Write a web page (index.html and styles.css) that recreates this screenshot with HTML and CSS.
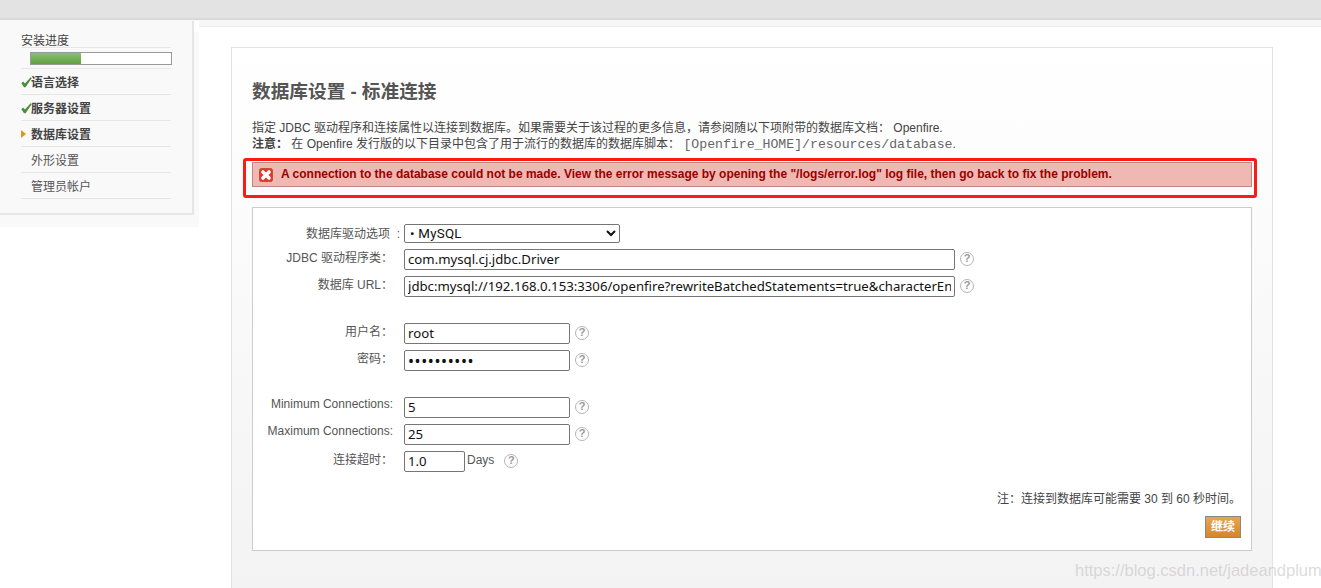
FILE: index.html
```html
<!DOCTYPE html>
<html lang="zh">
<head>
<meta charset="utf-8">
<title>数据库设置</title>
<link rel="stylesheet" href="styles.css">
</head>
<body>
<div class="topbar"></div>
<div class="layout">
  <aside class="side-wrap">
    <nav class="side">
      <div class="side-head">安装进度</div>
      <div class="progress-row"><div class="progress"><div class="progress-fill"></div></div></div>
      <div class="step done"><svg class="mark" viewBox="0 0 11 11"><path d="M0.3 6.2 L2.2 4.4 L4 6.6 L9.6 0.3 L10.8 1 L4.6 10.2 L3 10.2 Z" fill="#4a8f3c"/></svg>语言选择</div>
      <div class="step done"><svg class="mark" viewBox="0 0 11 11"><path d="M0.3 6.2 L2.2 4.4 L4 6.6 L9.6 0.3 L10.8 1 L4.6 10.2 L3 10.2 Z" fill="#4a8f3c"/></svg>服务器设置</div>
      <div class="step current"><svg class="arrow" viewBox="0 0 5 8"><path d="M0 0 L5 4 L0 8 Z" fill="#d99a12"/></svg>数据库设置</div>
      <div class="step">外形设置</div>
      <div class="step">管理员帐户</div>
    </nav>
  </aside>
  <main class="main">
    <h1 class="title">数据库设置 - 标准连接</h1>
    <p class="desc">指定 JDBC 驱动程序和连接属性以连接到数据库。如果需要关于该过程的更多信息，请参阅随以下项附带的数据库文档： Openfire.<br><b>注意：</b> 在 Openfire 发行版的以下目录中包含了用于流行的数据库的数据库脚本： <code>[Openfire_HOME]/resources/database</code>.</p>
    <div class="alert-mark">
      <div class="alert">
        <svg class="alert-icon" viewBox="0 0 16 16"><rect x="0.5" y="0.5" width="15" height="15" rx="2.5" fill="#dd3a2a" stroke="#c4432f"/><path d="M4.5 4.5 L11.5 11.5 M11.5 4.5 L4.5 11.5" stroke="#fff" stroke-width="4" stroke-linecap="round"/></svg>
        <span>A connection to the database could not be made. View the error message by opening the "/logs/error.log" log file, then go back to fix the problem.</span>
      </div>
    </div>
    <form class="panel">
      <div class="row row-select">
        <label class="lbl lbl-select" for="driver">数据库驱动选项&nbsp;&nbsp;:</label>
        <select class="select" id="driver"><option>• MySQL</option></select>
      </div>
      <div class="row">
        <label class="lbl" for="cls">JDBC 驱动程序类：</label>
        <input class="field wide" id="cls" value="com.mysql.cj.jdbc.Driver"><span class="help">?</span>
      </div>
      <div class="row">
        <label class="lbl" for="url">数据库 URL：</label>
        <input class="field wide" id="url" value="jdbc:mysql://192.168.0.153:3306/openfire?rewriteBatchedStatements=true&amp;characterEncoding=UTF-8"><span class="help">?</span>
      </div>
      <div class="row gap">
        <label class="lbl" for="user">用户名：</label>
        <input class="field mid" id="user" value="root"><span class="help">?</span>
      </div>
      <div class="row">
        <label class="lbl" for="pw">密码：</label>
        <input class="field mid dots" id="pw" type="password" value="1234567890"><span class="help">?</span>
      </div>
      <div class="row gap">
        <label class="lbl lbl-en" for="min">Minimum Connections:</label>
        <input class="field mid" id="min" value="5"><span class="help">?</span>
      </div>
      <div class="row">
        <label class="lbl lbl-en" for="max">Maximum Connections:</label>
        <input class="field mid" id="max" value="25"><span class="help">?</span>
      </div>
      <div class="row">
        <label class="lbl" for="timeout">连接超时：</label>
        <input class="field small" id="timeout" value="1.0"><span class="unit">Days</span><span class="help">?</span>
      </div>
      <p class="note">注：连接到数据库可能需要 30 到 60 秒时间。</p>
      <div class="actions"><button type="button" class="btn">继续</button></div>
    </form>
  </main>
</div>
<div class="watermark">https://blog.csdn.net/jadeandplum</div>
</body>
</html>
```
FILE: styles.css
```css
* { box-sizing: border-box; }
html, body { margin: 0; height: 100%; overflow: hidden; }
body {
  position: relative;
  background: #fff;
  font: 12px/16px "Liberation Sans", "Noto Sans CJK SC", sans-serif;
  color: #444;
}
.topbar {
  height: 27px;
  background: linear-gradient(#e3e3e3 0 18px, #d9d9d9 18px 20px, #f7f7f7 20px 26px, #ececec 26px 27px);
}
.layout { display: flex; align-items: flex-start; margin-top: -6px; }
.side-wrap {
  flex: none;
  width: 199px;
  height: 206px;
  background: linear-gradient(#fff 0 11px, #f9f9f9 11px);
}
.side {
  width: 194px;
  height: 194px;
  padding: 12px 21px 0 21px;
  background: #f9f9f9;
  border-right: 2px solid #e6e6e6;
  border-bottom: 2px solid #e6e6e6;
}
.side-head { height: 15px; line-height: 17px; border-bottom: 1px solid #e6e6e6; color: #444; }
.progress-row { height: 21px; padding: 4px 0 0 9px; border-bottom: 1px solid #e6e6e6; }
.progress { width: 142px; height: 13px; border: 1px solid #999; background: #fff; }
.progress-fill { width: 50px; height: 100%; background: linear-gradient(#8dbf70, #5fa142); }
.step {
  display: flex;
  align-items: center;
  height: 26px;
  padding-left: 10px;
  padding-top: 3px;
  border-bottom: 1px solid #e6e6e6;
  color: #555;
  position: relative;
}
.done, .current { font-weight: bold; color: #444; }
.mark { position: absolute; left: 0; top: 8px; width: 11px; height: 11px; }
.arrow { position: absolute; left: 0; top: 9px; width: 5px; height: 8px; }
.main {
  flex: none;
  width: 1042px;
  height: 541px;
  margin: 26px 0 0 32px;
  padding: 31px 20px 0;
  border: 1px solid #e3e3e3;
  border-bottom: 0;
  background: linear-gradient(#fff 0, #f3f3f3 100%);
}
.title { margin: 0 0 15px; font-size: 18.67px; line-height: 26px; font-weight: bold; color: #555; }
.desc { margin: 0; line-height: 16px; color: #444; }
.desc code { font: 13.2px/16px "Liberation Mono", monospace; color: #666; }
.alert-mark { position: relative; margin: 9px 0 20px; }
.alert {
  display: flex;
  align-items: center;
  height: 25px;
  width: 1000px;
  padding: 0 0 2px 6px;
  background: #efb8b2;
  border: 1px solid #bd8884;
  color: #900;
  font-weight: bold;
}
.alert::after {
  content: "";
  box-sizing: border-box;
  position: absolute;
  left: -9px;
  top: -4px;
  width: 1014px;
  height: 40px;
  border: 3px solid #fb1a14;
  border-radius: 3px;
}
.alert-icon { flex: none; width: 14px; height: 14px; margin: 2px 8px 0 0; }
.panel {
  width: 1000px;
  height: 344px;
  padding-top: 16px;
  background: #fff;
  border: 1px solid #ccc;
}
.row { display: flex; align-items: flex-start; height: 27px; }
.row-select { height: 25px; }
.gap { margin-top: 20px; }
.lbl {
  flex: none;
  width: 140px;
  margin-right: 11px;
  padding-top: 1px;
  text-align: right;
  color: #555;
  white-space: nowrap;
}
.lbl-en { padding-top: 0; line-height: 14px; }
.lbl-select { width: 147px; margin-right: 4px; padding-top: 2px; }
.select {
  width: 216px;
  height: 19px;
  padding: 0 0 0 1px;
  background: #fff;
  border: 1px solid #767676;
  border-radius: 2px;
  font: 13.33px "Roboto", sans-serif;
  letter-spacing: 0.25px;
  color: #111;
}
.field {
  height: 21px;
  padding: 0 3px 2px;
  border: 1px solid #767676;
  border-radius: 2px;
  background: #fff;
  font: 13.2px "Noto Sans", sans-serif;
  color: #111;
}
.wide { width: 551px; }
.mid { width: 166px; }
.small { width: 61px; }
.dots { font-size: 16px; letter-spacing: 0.6px; padding-bottom: 0; }
.help {
  flex: none;
  width: 14px;
  height: 14px;
  margin: 3px 0 0 5px;
  border: 1.5px solid #b5b5b5;
  border-radius: 50%;
  color: #999;
  font: bold 11px/11px "Liberation Sans", sans-serif;
  text-align: center;
}
.unit { margin: 1px 3px 0 2px; color: #555; }
.unit + .help { margin-left: 7px; }
.note { margin: 13px 10px 0 0; text-align: right; color: #444; }
.actions { display: flex; justify-content: flex-end; padding: 9px 10px 0 0; }
.btn {
  width: 36px;
  height: 22px;
  padding: 0;
  border: 1px solid #888;
  background: linear-gradient(#e6a650, #d5862b);
  color: #fff;
  font: bold 12px/18px "Liberation Sans", "Noto Sans CJK SC", sans-serif;
}
.watermark {
  position: absolute;
  left: 1075px;
  top: 560px;
  font: 16.5px/20px "Liberation Sans", sans-serif;
  color: rgba(190,190,190,.55);
  white-space: nowrap;
}
```
